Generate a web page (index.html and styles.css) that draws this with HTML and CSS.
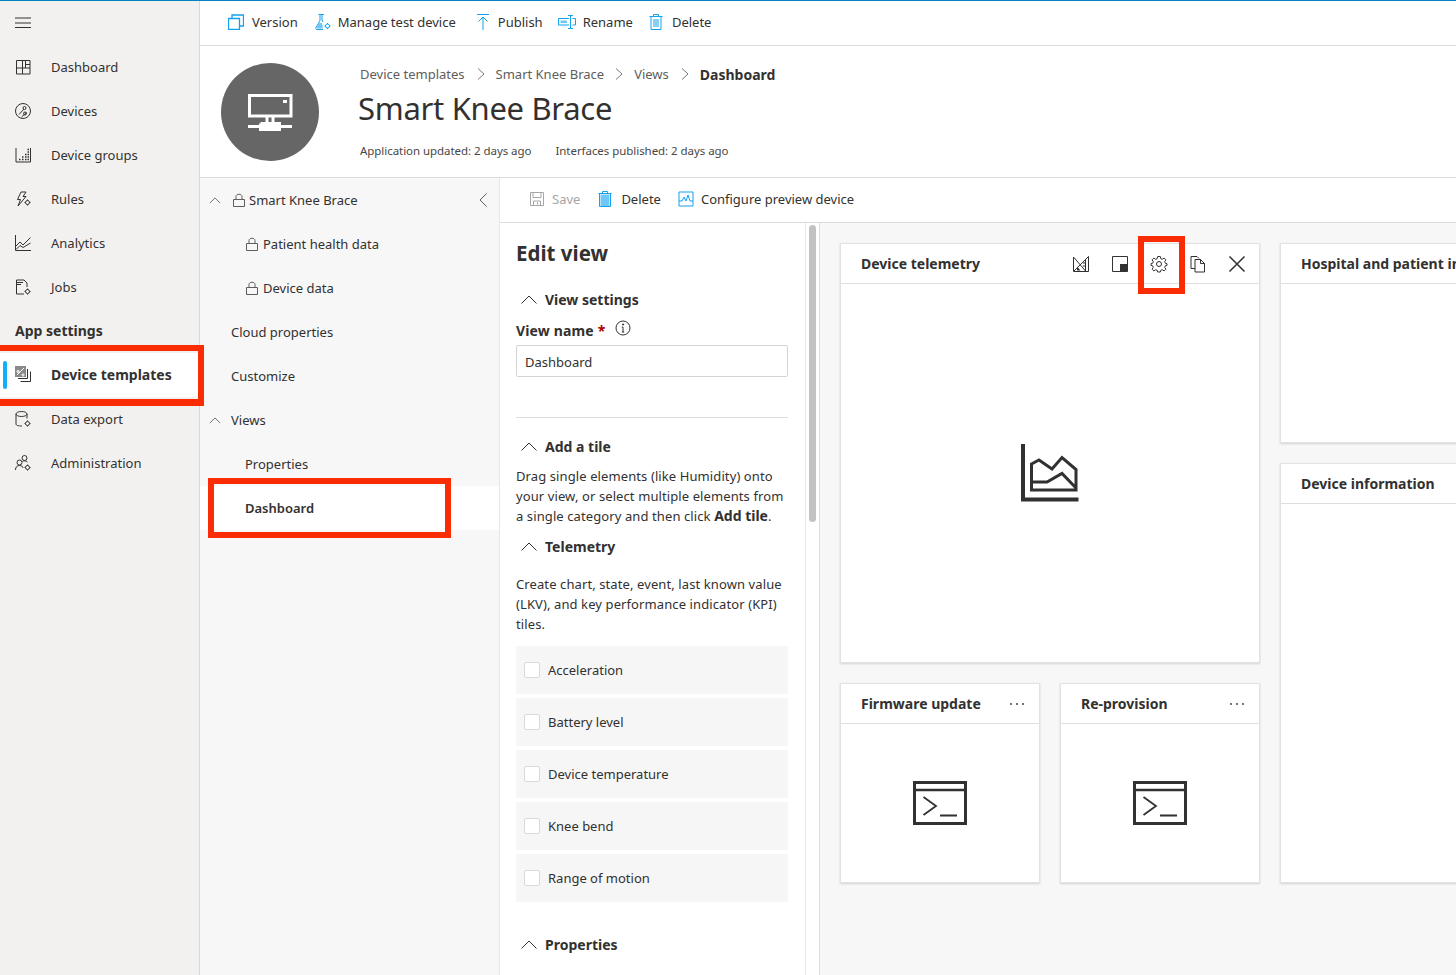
FILE: index.html
```html
<!DOCTYPE html>
<html>
<head>
  <title>Smart Knee Brace - Dashboard</title>
  <link rel="stylesheet" href="styles.css">
</head>
<body>

  <div class="topline"></div>

  <div class="app">

    <nav class="nav">
      <div class="nav-burger">
        <svg class="ico" viewBox="0 0 16 16"><path d="M0 .5H16M0 5.5H16M0 10H16" transform="translate(0 2.5)"/></svg>
      </div>
      <a class="nav-item">
        <svg class="ico" viewBox="0 0 16 16"><path d="M1.500 1.500H15V15H1.500ZM1.500 9H15M7.500 1.500V15M10.500 1.500V9M10.500 5.500H15"/></svg>
        Dashboard
      </a>
      <a class="nav-item">
        <svg class="ico" viewBox="0 0 16 16"><circle cx="8" cy="8" r="7.500"/><path d="M4 11.500 9 6M6.500 14 11.500 9.500"/><circle cx="9.500" cy="5" r="1.500"/><circle cx="10" cy="10.500" r="1.500"/></svg>
        Devices
      </a>
      <a class="nav-item">
        <svg class="ico" viewBox="0 0 16 16"><path d="M1 1V15H15.500V1"/><path class="dots" d="M4 12.500H5.500M7 12.500H8.500M10 12.500H11.500M12.500 12.500H14M7 10H8.500M10 10H11.500M12.500 10H14M10 7.500H11.500M12.500 7.500H14M12.500 5H14M12.500 2.500H14"/></svg>
        Device groups
      </a>
      <a class="nav-item">
        <svg class="ico" viewBox="0 0 16 16"><path d="M6 1H11L8 5.500H11L3 15 5.500 8.500H2.500Z"/><circle cx="12.500" cy="11.500" r="2"/><path d="M12.500 8.500V9.500M12.500 13.500V14.500M9.500 11.500H10.500M14.500 11.500H15.500"/></svg>
        Rules
      </a>
      <a class="nav-item">
        <svg class="ico" viewBox="0 0 16 16"><path d="M.5 0V15.500H16M1 11 5 7 8 10 15.500 2.500M1 14.500 5 10.500 8 12.500 15.500 8"/></svg>
        Analytics
      </a>
      <a class="nav-item">
        <svg class="ico" viewBox="0 0 16 16"><path d="M9 15H1.500V1H9L12 4V8M2 3.500H8M2 5.500H6"/><circle cx="12.500" cy="12.500" r="2"/><path d="M12.500 9.500V10.500M12.500 14.500V15.500M9.500 12.500H10.500M14.500 12.500H15.500"/></svg>
        Jobs
      </a>
      <div class="nav-title">App settings</div>
      <a class="nav-item active">
        <svg class="ico" viewBox="0 0 16 16"><rect class="solid" x="0" y="0" width="11" height="11"/><path class="light" d="M2 9 9 2M3 4.500A1 1 0 1 0 3.010 4.500M8 8A1 1 0 1 0 8.010 8"/><path d="M12.500 3V12.500H3M15.500 5.500V15.500H5.500"/></svg>
        Device templates
      </a>
      <a class="nav-item">
        <svg class="ico" viewBox="0 0 16 16"><ellipse cx="6.500" cy="3" rx="5.500" ry="2.500"/><path d="M1 3V13C1 14.500 3.500 15 7 15M12 3V7.500"/><circle cx="12.500" cy="12.500" r="2"/><path d="M12.500 9.500V10.500M12.500 14.500V15.500M9.500 12.500H10.500M14.500 12.500H15.500"/></svg>
        Data export
      </a>
      <a class="nav-item">
        <svg class="ico" viewBox="0 0 16 16"><circle cx="9.500" cy="3" r="2.500"/><circle cx="4.500" cy="7.500" r="2.500"/><path d="M.5 15C.5 12 2 10.500 4.500 10.500S8 12 8 13M7.500 6.500C8.500 5.500 11 5.500 12.500 7"/><circle cx="12.500" cy="12.500" r="2"/><path d="M12.500 9.500V10.500M12.500 14.500V15.500M9.500 12.500H10.500M14.500 12.500H15.500"/></svg>
        Administration
      </a>
    </nav>

    <div class="main">

      <div class="toolbar">
        <span class="tool t-version">
          <svg class="ico blue" viewBox="0 0 16 16"><path d="M.5 4.500H11.500V15.500H.5ZM4 4.500V1H15.500V12H11.500" stroke-width="1.300"/></svg>
          Version
        </span>
        <span class="tool t-manage">
          <svg class="ico blue" viewBox="0 0 16 16"><path d="M3.500 .5H9M5 1V6.500L1 13.500C.5 15 1 15.500 2 15.500H8"/><path class="fill" d="M3.500 9H7L8 14.500H1.500Z"/><path d="M7 1V6L8 8"/><circle cx="12.500" cy="12" r="2"/><path d="M12.500 9V10M12.500 14V15M9.500 12H10.500M14.500 12H15.500"/></svg>
          Manage test device
        </span>
        <span class="tool t-publish">
          <svg class="ico blue" viewBox="0 0 16 16"><path d="M2 .5H14M8 3V16M3.500 7.500 8 3 12.500 7.500"/></svg>
          Publish
        </span>
        <span class="tool t-rename">
          <svg class="ico blue wide" viewBox="0 0 18 16"><path d="M11 4.500H.5V11H11M14.500 4.500H17.500V11H14.500M12 1.500H12.500V14.500H12M10 1.500H15M10 14.500H15"/><path class="fill" d="M2.500 6.500H9V9H2.500Z"/></svg>
          Rename
        </span>
        <span class="tool t-delete">
          <svg class="ico blue" viewBox="0 0 16 16"><path d="M1.500 2.500H14.500M3 2.500V15.500H13V2.500M5.500 2.500V.5H10.500V2.500M6 5V13M8 5V13M10 5V13"/></svg>
          Delete
        </span>
      </div>

      <header class="head">
        <div class="avatar">
          <svg class="avatar-ico" viewBox="0 0 46 38"><path d="M2.500 2.500H44V23H2.500ZM20 23V30M26 23V30M1 33.500H45M13.500 30.500V36.500H32.500V30.500H13.500M23 30V34" stroke-width="3"/><path class="white" d="M36 7H40V10H36Z"/></svg>
        </div>
        <div class="head-text">
          <div class="crumbs">
            <span>Device templates</span>
            <svg class="crumb-sep first" viewBox="0 0 8 12"><path d="M1 .5 7 6 1 11.500"/></svg>
            <span>Smart Knee Brace</span>
            <svg class="crumb-sep" viewBox="0 0 8 12"><path d="M1 .5 7 6 1 11.500"/></svg>
            <span>Views</span>
            <svg class="crumb-sep first" viewBox="0 0 8 12"><path d="M1 .5 7 6 1 11.500"/></svg>
            <b>Dashboard</b>
          </div>
          <h1>Smart Knee Brace</h1>
          <div class="meta">
            <span>Application updated: 2 days ago</span>
            <span>Interfaces published: 2 days ago</span>
          </div>
        </div>
      </header>

      <div class="work">

        <aside class="tree">
          <div class="tree-row lvl-0">
            <svg class="chev" viewBox="0 0 14 8"><path d="M1 7 7 1 13 7"/></svg>
            <svg class="lock" viewBox="0 0 12 14"><path d="M.5 6.500H11.500V13.500H.5ZM3 6.500V3.500C3 .5 9 .5 9 3.500V6.500"/></svg>
            <span class="grow">Smart Knee Brace</span>
            <svg class="collapse" viewBox="0 0 8 14"><path d="M7.500 .5 1 7 7.500 13.500"/></svg>
          </div>
          <div class="tree-row lvl-1">
            <svg class="lock" viewBox="0 0 12 14"><path d="M.5 6.500H11.500V13.500H.5ZM3 6.500V3.500C3 .5 9 .5 9 3.500V6.500"/></svg>
            Patient health data
          </div>
          <div class="tree-row lvl-1">
            <svg class="lock" viewBox="0 0 12 14"><path d="M.5 6.500H11.500V13.500H.5ZM3 6.500V3.500C3 .5 9 .5 9 3.500V6.500"/></svg>
            Device data
          </div>
          <div class="tree-row lvl-2">Cloud properties</div>
          <div class="tree-row lvl-2">Customize</div>
          <div class="tree-row lvl-0">
            <svg class="chev" viewBox="0 0 14 8"><path d="M1 7 7 1 13 7"/></svg>
            <span class="views-label">Views</span>
          </div>
          <div class="tree-row lvl-3">Properties</div>
          <div class="tree-row lvl-3 selected">Dashboard</div>
        </aside>

        <div class="editor">

          <div class="subbar">
            <span class="tool muted tight">
              <svg class="ico grey" viewBox="0 0 16 16"><path d="M1.500 1.500H14.500V14.500H1.500ZM4 1.500V6.500H12V1.500M4.500 14.500V10H11.500V14.500M8.500 11V13.500"/></svg>
              Save
            </span>
            <span class="tool">
              <svg class="ico blue" viewBox="0 0 16 16"><path class="fill" d="M3.500 3.500H12.500V15H3.500Z"/><path d="M1.500 2.500H14.500M2.500 2.500V15.500H13.500V2.500M5.500 2.500V.5H10.500V2.500"/></svg>
              Delete
            </span>
            <span class="tool tight">
              <svg class="ico blue" viewBox="0 0 16 16"><path d="M1 1H15V15H1ZM1 10H4L6 6 8 10 10 4 12 10H15"/></svg>
              Configure preview device
            </span>
          </div>

          <div class="split">

            <section class="form-wrap">
              <div class="form">
                <h2>Edit view</h2>

                <div class="sec sec-first">
                  <svg class="sec-chev" viewBox="0 0 16 9"><path d="M.5 8.500 8 1 15.500 8.500"/></svg>
                  View settings
                </div>

                <div class="field-label">
                  View name <span class="req">*</span>
                  <svg class="info" viewBox="0 0 16 16"><circle cx="8" cy="8" r="7"/><path d="M8 7V12M6.800 12H9.200M6.800 7H8"/><path d="M7.600 4H8.600V5H7.600Z"/></svg>
                </div>
                <div class="input">Dashboard</div>

                <div class="rule"></div>

                <div class="sec sec-tile">
                  <svg class="sec-chev" viewBox="0 0 16 9"><path d="M.5 8.500 8 1 15.500 8.500"/></svg>
                  Add a tile
                </div>
                <p class="copy">Drag single elements (like Humidity) onto your view, or select multiple elements from a single category and then click <b>Add tile</b>.</p>

                <div class="sec sec-tele">
                  <svg class="sec-chev" viewBox="0 0 16 9"><path d="M.5 8.500 8 1 15.500 8.500"/></svg>
                  Telemetry
                </div>
                <p class="copy copy-tele">Create chart, state, event, last known value (LKV), and key performance indicator (KPI) tiles.</p>

                <div class="checks">
                  <label class="check"><span class="box"></span>Acceleration</label>
                  <label class="check"><span class="box"></span>Battery level</label>
                  <label class="check"><span class="box"></span>Device temperature</label>
                  <label class="check"><span class="box"></span>Knee bend</label>
                  <label class="check"><span class="box"></span>Range of motion</label>
                </div>

                <div class="sec sec-props">
                  <svg class="sec-chev" viewBox="0 0 16 9"><path d="M.5 8.500 8 1 15.500 8.500"/></svg>
                  Properties
                </div>
              </div>
              <div class="scroll"><div class="thumb"></div></div>
            </section>

            <section class="canvas">
              <div class="tile tile-big">
                <div class="tile-head">
                  <span class="tile-title">Device telemetry</span>
                  <span class="tile-btn">
                    <svg viewBox="0 0 18 18"><path d="M1.500 2V16.500H16.500V1.500L2 16M1.500 2 14 16.500M13.500 5V16M11 8H13.500M11 11H13.500"/><path class="dark" d="M5 11.500 8.500 15.500H5Z"/></svg>
                  </span>
                  <span class="tile-btn">
                    <svg viewBox="0 0 18 18"><path d="M1.500 1.500H16.500V16.500H1.500Z"/><path class="dark" d="M9 9H16.500V16.500H9Z"/></svg>
                  </span>
                  <span class="tile-btn">
                    <svg viewBox="0 0 18 18"><circle cx="9" cy="9" r="2.500"/><path d="M7.700 1.500H10.300L10.800 3.700 12.300 4.300 14.200 3.100 15.900 4.800 14.700 6.700 15.300 8.200 17 8.700V10.300L15.300 10.800 14.700 12.300 15.900 14.200 14.200 15.900 12.300 14.700 10.800 15.300 10.300 17H7.700L7.200 15.300 5.700 14.700 3.800 15.900 2.100 14.200 3.300 12.300 2.700 10.800 1 10.300V8.700L2.700 8.200 3.300 6.700 2.100 4.800 3.800 3.100 5.700 4.300 7.200 3.700Z"/></svg>
                  </span>
                  <span class="tile-btn">
                    <svg viewBox="0 0 18 18"><path d="M6 13.500H2V1.500H8L10 3.500M6 4.500H11.500L15.500 8.500V17H6ZM11.500 4.500V8.500H15.500"/></svg>
                  </span>
                  <span class="tile-btn">
                    <svg viewBox="0 0 18 18"><path class="thick" d="M1.500 1.500 16.500 16.500M16.500 1.500 1.500 16.500"/></svg>
                  </span>
                </div>
                <div class="tile-body">
                  <svg class="chart-ico" viewBox="0 0 60 60"><path d="M4 2V57.500H59.500" stroke-width="4"/><path d="M12.500 22 20 18 33 27 43 15.500 57 27.500V48H12.500ZM12.500 40H28L43 31.500 57 46"/></svg>
                </div>
              </div>

              <div class="tile tile-tall-a">
                <div class="tile-head"><span class="tile-title">Hospital and patient information</span></div>
              </div>

              <div class="tile tile-tall-b">
                <div class="tile-head"><span class="tile-title">Device information</span></div>
              </div>

              <div class="tile tile-fw">
                <div class="tile-head">
                  <span class="tile-title">Firmware update</span>
                  <svg class="dots-btn" viewBox="0 0 16 4"><circle cx="2" cy="2" r=".9"/><circle cx="8" cy="2" r=".9"/><circle cx="14" cy="2" r=".9"/></svg>
                </div>
                <div class="tile-body">
                  <svg class="term-ico" viewBox="0 0 54 44"><path d="M1.500 1.500H52.500V42.500H1.500Z" stroke-width="3"/><path d="M1.500 9H52.500" stroke-width="2.500"/><path d="M10.500 16 23 25 10.500 34M27 34.500H44" stroke-width="1.800"/></svg>
                </div>
              </div>

              <div class="tile tile-rp">
                <div class="tile-head">
                  <span class="tile-title">Re-provision</span>
                  <svg class="dots-btn" viewBox="0 0 16 4"><circle cx="2" cy="2" r=".9"/><circle cx="8" cy="2" r=".9"/><circle cx="14" cy="2" r=".9"/></svg>
                </div>
                <div class="tile-body">
                  <svg class="term-ico" viewBox="0 0 54 44"><path d="M1.500 1.500H52.500V42.500H1.500Z" stroke-width="3"/><path d="M1.500 9H52.500" stroke-width="2.500"/><path d="M10.500 16 23 25 10.500 34M27 34.500H44" stroke-width="1.800"/></svg>
                </div>
              </div>
            </section>

          </div>
        </div>
      </div>
    </div>
  </div>

  <!-- red callouts drawn on top of the screenshot -->
  <div class="mark mark-nav"></div>
  <div class="mark mark-tree"></div>
  <div class="mark mark-gear"></div>

</body>
</html>
```

FILE: styles.css
```css
* {
  box-sizing: border-box;
}
html, body {
  margin: 0;
  height: 975px;
  overflow: hidden;
}
body {
  position: relative;
  background: #fff;
  font-family: "Noto Sans", "Open Sans", sans-serif;
  font-size: 13px;
  color: #323130;
}
svg {
  display: block;
  flex: none;
  fill: none;
  stroke: #323130;
  stroke-width: 1;
}
b {
  font-size: 14px;
  font-weight: 700;
}

.topline {
  height: 1px;
  background: #0582c4;
}
.app {
  display: flex;
  height: 974px;
}

/* left nav */
.nav {
  width: 200px;
  flex: none;
  background: #f2f1f0;
  border-right: 1px solid #d9d9d9;
}
.nav-burger {
  height: 44px;
  padding: 14px 0 0 15px;
}
.nav-item, .nav-title {
  display: flex;
  align-items: center;
  height: 44px;
  padding-left: 15px;
}
.nav-item .ico {
  margin-right: 20px;
}
.nav-title {
  padding-bottom: 2px;
  font-size: 14px;
  font-weight: 700;
}
.nav-item.active {
  position: relative;
  padding-bottom: 2px;
  background: #fff;
  font-size: 14px;
  font-weight: 700;
}
.nav-item.active::before {
  content: "";
  position: absolute;
  left: 3px;
  top: 8px;
  width: 4px;
  height: 28px;
  border-radius: 2px;
  background: #0fb0f5;
}
.ico {
  width: 16px;
  height: 16px;
}
.ico .dots {
  stroke-width: 1.500;
}
.ico .solid {
  fill: #8a8a8a;
  stroke: none;
}
.ico .light {
  stroke: #fff;
}
.blue {
  stroke: #13a1f0;
}
.blue .fill {
  fill: #6fc7f7;
  stroke: none;
}
.grey {
  stroke: #a6a6a6;
}
.wide {
  width: 18px;
}

/* top toolbar */
.main {
  flex: 1;
  min-width: 0;
  display: flex;
  flex-direction: column;
}
.toolbar {
  display: flex;
  align-items: center;
  height: 45px;
  padding: 0 0 2px 28px;
  border-bottom: 1px solid #dcdcdc;
}
.tool {
  display: flex;
  align-items: center;
  gap: 8px;
}
.t-version { margin-right: 17px; }
.t-manage { margin-right: 19px; gap: 7px; }
.t-publish { margin-right: 15px; gap: 7px; }
.t-rename { margin-right: 15px; gap: 7px; }

/* header */
.head {
  display: flex;
  height: 132px;
  border-bottom: 1px solid #dcdcdc;
}
.avatar {
  width: 98px;
  height: 98px;
  margin: 17px 0 0 21px;
  border-radius: 50%;
  background: #666;
  display: flex;
  align-items: center;
  justify-content: center;
}
.avatar-ico {
  width: 46px;
  height: 38px;
  stroke: #fff;
}
.avatar-ico .white {
  fill: #fff;
  stroke: none;
}
.head-text {
  margin-left: 39px;
}
.crumbs {
  display: flex;
  align-items: center;
  height: 20px;
  margin-top: 18px;
  margin-left: 2px;
  color: #605e5c;
}
.crumbs b {
  color: #323130;
}
.crumb-sep {
  width: 8px;
  height: 12px;
  margin: 0 11px;
  stroke: #797775;
}
.crumb-sep.first {
  margin-left: 12px;
}
h1 {
  margin: 3px 0 0;
  font-size: 31px;
  line-height: 42px;
  font-weight: 400;
  letter-spacing: -0.3px;
}
.meta {
  display: flex;
  gap: 24px;
  margin: 14px 0 0 2px;
  font-size: 11.5px;
  line-height: 16px;
  letter-spacing: -0.05px;
  color: #484644;
}

/* second column */
.work {
  flex: 1;
  min-height: 0;
  display: flex;
}
.tree {
  width: 300px;
  flex: none;
  background: #f7f7f7;
  border-right: 1px solid #e6e6e6;
}
.tree-row {
  display: flex;
  align-items: center;
  height: 44px;
}
.grow {
  flex: 1;
}
.lvl-0 { padding-left: 9px; }
.lvl-1 { padding-left: 46px; }
.lvl-2 { padding-left: 31px; }
.lvl-3 { padding-left: 45px; }
.tree-row.selected {
  background: #fff;
  font-weight: 600;
}
.chev {
  width: 12px;
  height: 7px;
  stroke: #605e5c;
  margin-right: 12px;
}
.lock {
  width: 12px;
  height: 14px;
  margin-right: 5px;
  stroke: #605e5c;
}
.lvl-0 .lock {
  margin-right: 4px;
}
.views-label {
  margin-left: -2px;
}
.collapse {
  width: 8px;
  height: 14px;
  margin-right: 12px;
  stroke: #605e5c;
}

/* editor */
.editor {
  flex: 1;
  min-width: 0;
  display: flex;
  flex-direction: column;
}
.subbar {
  display: flex;
  align-items: center;
  gap: 17px;
  height: 45px;
  padding: 0 0 2px 29px;
  border-bottom: 1px solid #dcdcdc;
}
.tool.tight {
  gap: 7px;
}
.muted {
  color: #a6a6a6;
}
.split {
  flex: 1;
  min-height: 0;
  display: flex;
}
.form-wrap {
  width: 320px;
  flex: none;
  display: flex;
}
.form {
  width: 305px;
  padding: 0 17px 0 16px;
}
h2 {
  margin: 16px 0 0;
  font-size: 20.5px;
  line-height: 28px;
  font-weight: 700;
}
.sec {
  display: flex;
  align-items: center;
  height: 20px;
  padding-left: 5px;
  font-size: 14px;
  font-weight: 700;
}
.sec-chev {
  width: 16px;
  height: 9px;
  margin-right: 8px;
}
.sec-first { margin-top: 22px; }
.field-label {
  display: flex;
  align-items: center;
  height: 20px;
  margin-top: 11px;
  font-size: 14px;
  font-weight: 700;
  letter-spacing: .15px;
}
.req {
  color: #a80000;
  margin-left: 4px;
}
.info {
  width: 16px;
  height: 16px;
  margin: -4px 0 0 9px;
}
.input {
  height: 32px;
  margin-top: 5px;
  padding: 0 8px;
  line-height: 32px;
  border: 1px solid #d4d4d4;
  border-radius: 2px;
}
.rule {
  height: 1px;
  margin-top: 40px;
  background: #dcdcdc;
}
.sec-tile { margin-top: 18px; }
.copy {
  margin: 10px 0 0;
  line-height: 20px;
  letter-spacing: .1px;
}
.copy b {
  letter-spacing: 0;
}
.sec-tele { margin-top: 10px; }
.copy-tele { margin-top: 18px; }
.checks {
  display: flex;
  flex-direction: column;
  gap: 4px;
  margin-top: 12px;
}
.check {
  display: flex;
  align-items: center;
  height: 48px;
  padding-left: 8px;
  background: #f6f6f6;
}
.box {
  width: 16px;
  height: 16px;
  margin-right: 8px;
  background: #fff;
  border: 1px solid #dadada;
  border-radius: 2px;
}
.sec-props { margin-top: 32px; }
.scroll {
  width: 15px;
  flex: none;
  padding: 2px 3px 0;
  border-left: 1px solid #e6e6e6;
  border-right: 1px solid #dcdcdc;
}
.thumb {
  height: 297px;
  border-radius: 4px;
  background: #c2c2c2;
}

/* tiles */
.canvas {
  flex: 1;
  min-width: 0;
  overflow: hidden;
  background: #f7f7f7;
  padding: 20px 0 0 20px;
  display: grid;
  grid-template-columns: repeat(4, 200px);
  grid-template-rows: repeat(3, 200px);
  gap: 20px;
}
.tile {
  display: flex;
  flex-direction: column;
  background: #fff;
  border: 1px solid #e2e2e2;
  box-shadow: 0 1px 2px rgba(0, 0, 0, .15);
}
.tile-big {
  grid-column: 1 / 3;
  grid-row: 1 / 3;
}
.tile-tall-a {
  grid-column: 3 / 5;
  grid-row: 1;
}
.tile-tall-b {
  grid-column: 3 / 5;
  grid-row: 2 / 4;
}
.tile-fw {
  grid-column: 1;
  grid-row: 3;
}
.tile-rp {
  grid-column: 2;
  grid-row: 3;
}
.tile-head {
  display: flex;
  align-items: center;
  height: 40px;
  flex: none;
  padding-left: 20px;
  border-bottom: 1px solid #dedede;
}
.tile-title {
  flex: 1;
  font-size: 14px;
  font-weight: 700;
  white-space: nowrap;
}
.tile-btn {
  width: 39px;
  display: flex;
  justify-content: center;
}
.tile-btn svg {
  width: 18px;
  height: 18px;
}
.tile-btn .dark {
  fill: #323130;
  stroke: none;
}
.tile-btn .thick {
  stroke-width: 1.500;
}
.tile-btn:last-child {
  margin-right: 3px;
}
.dots-btn {
  width: 16px;
  height: 4px;
  margin-right: 14px;
  fill: #323130;
  stroke: none;
}
.tile-body {
  flex: 1;
  display: flex;
  align-items: center;
  justify-content: center;
}
.chart-ico {
  width: 60px;
  height: 60px;
  margin: -2px 2px 0 0;
  stroke-width: 3;
}
.term-ico {
  width: 54px;
  height: 44px;
  margin-top: -1px;
}

/* red callouts */
.mark {
  position: absolute;
  border: 6px solid #f92c04;
}
.mark-nav {
  left: 0;
  top: 345px;
  width: 204px;
  height: 61px;
  border-left: 0;
  border-bottom-width: 7px;
}
.mark-tree {
  left: 208px;
  top: 478px;
  width: 243px;
  height: 60px;
}
.mark-gear {
  left: 1138px;
  top: 236px;
  width: 47px;
  height: 58px;
}
```
